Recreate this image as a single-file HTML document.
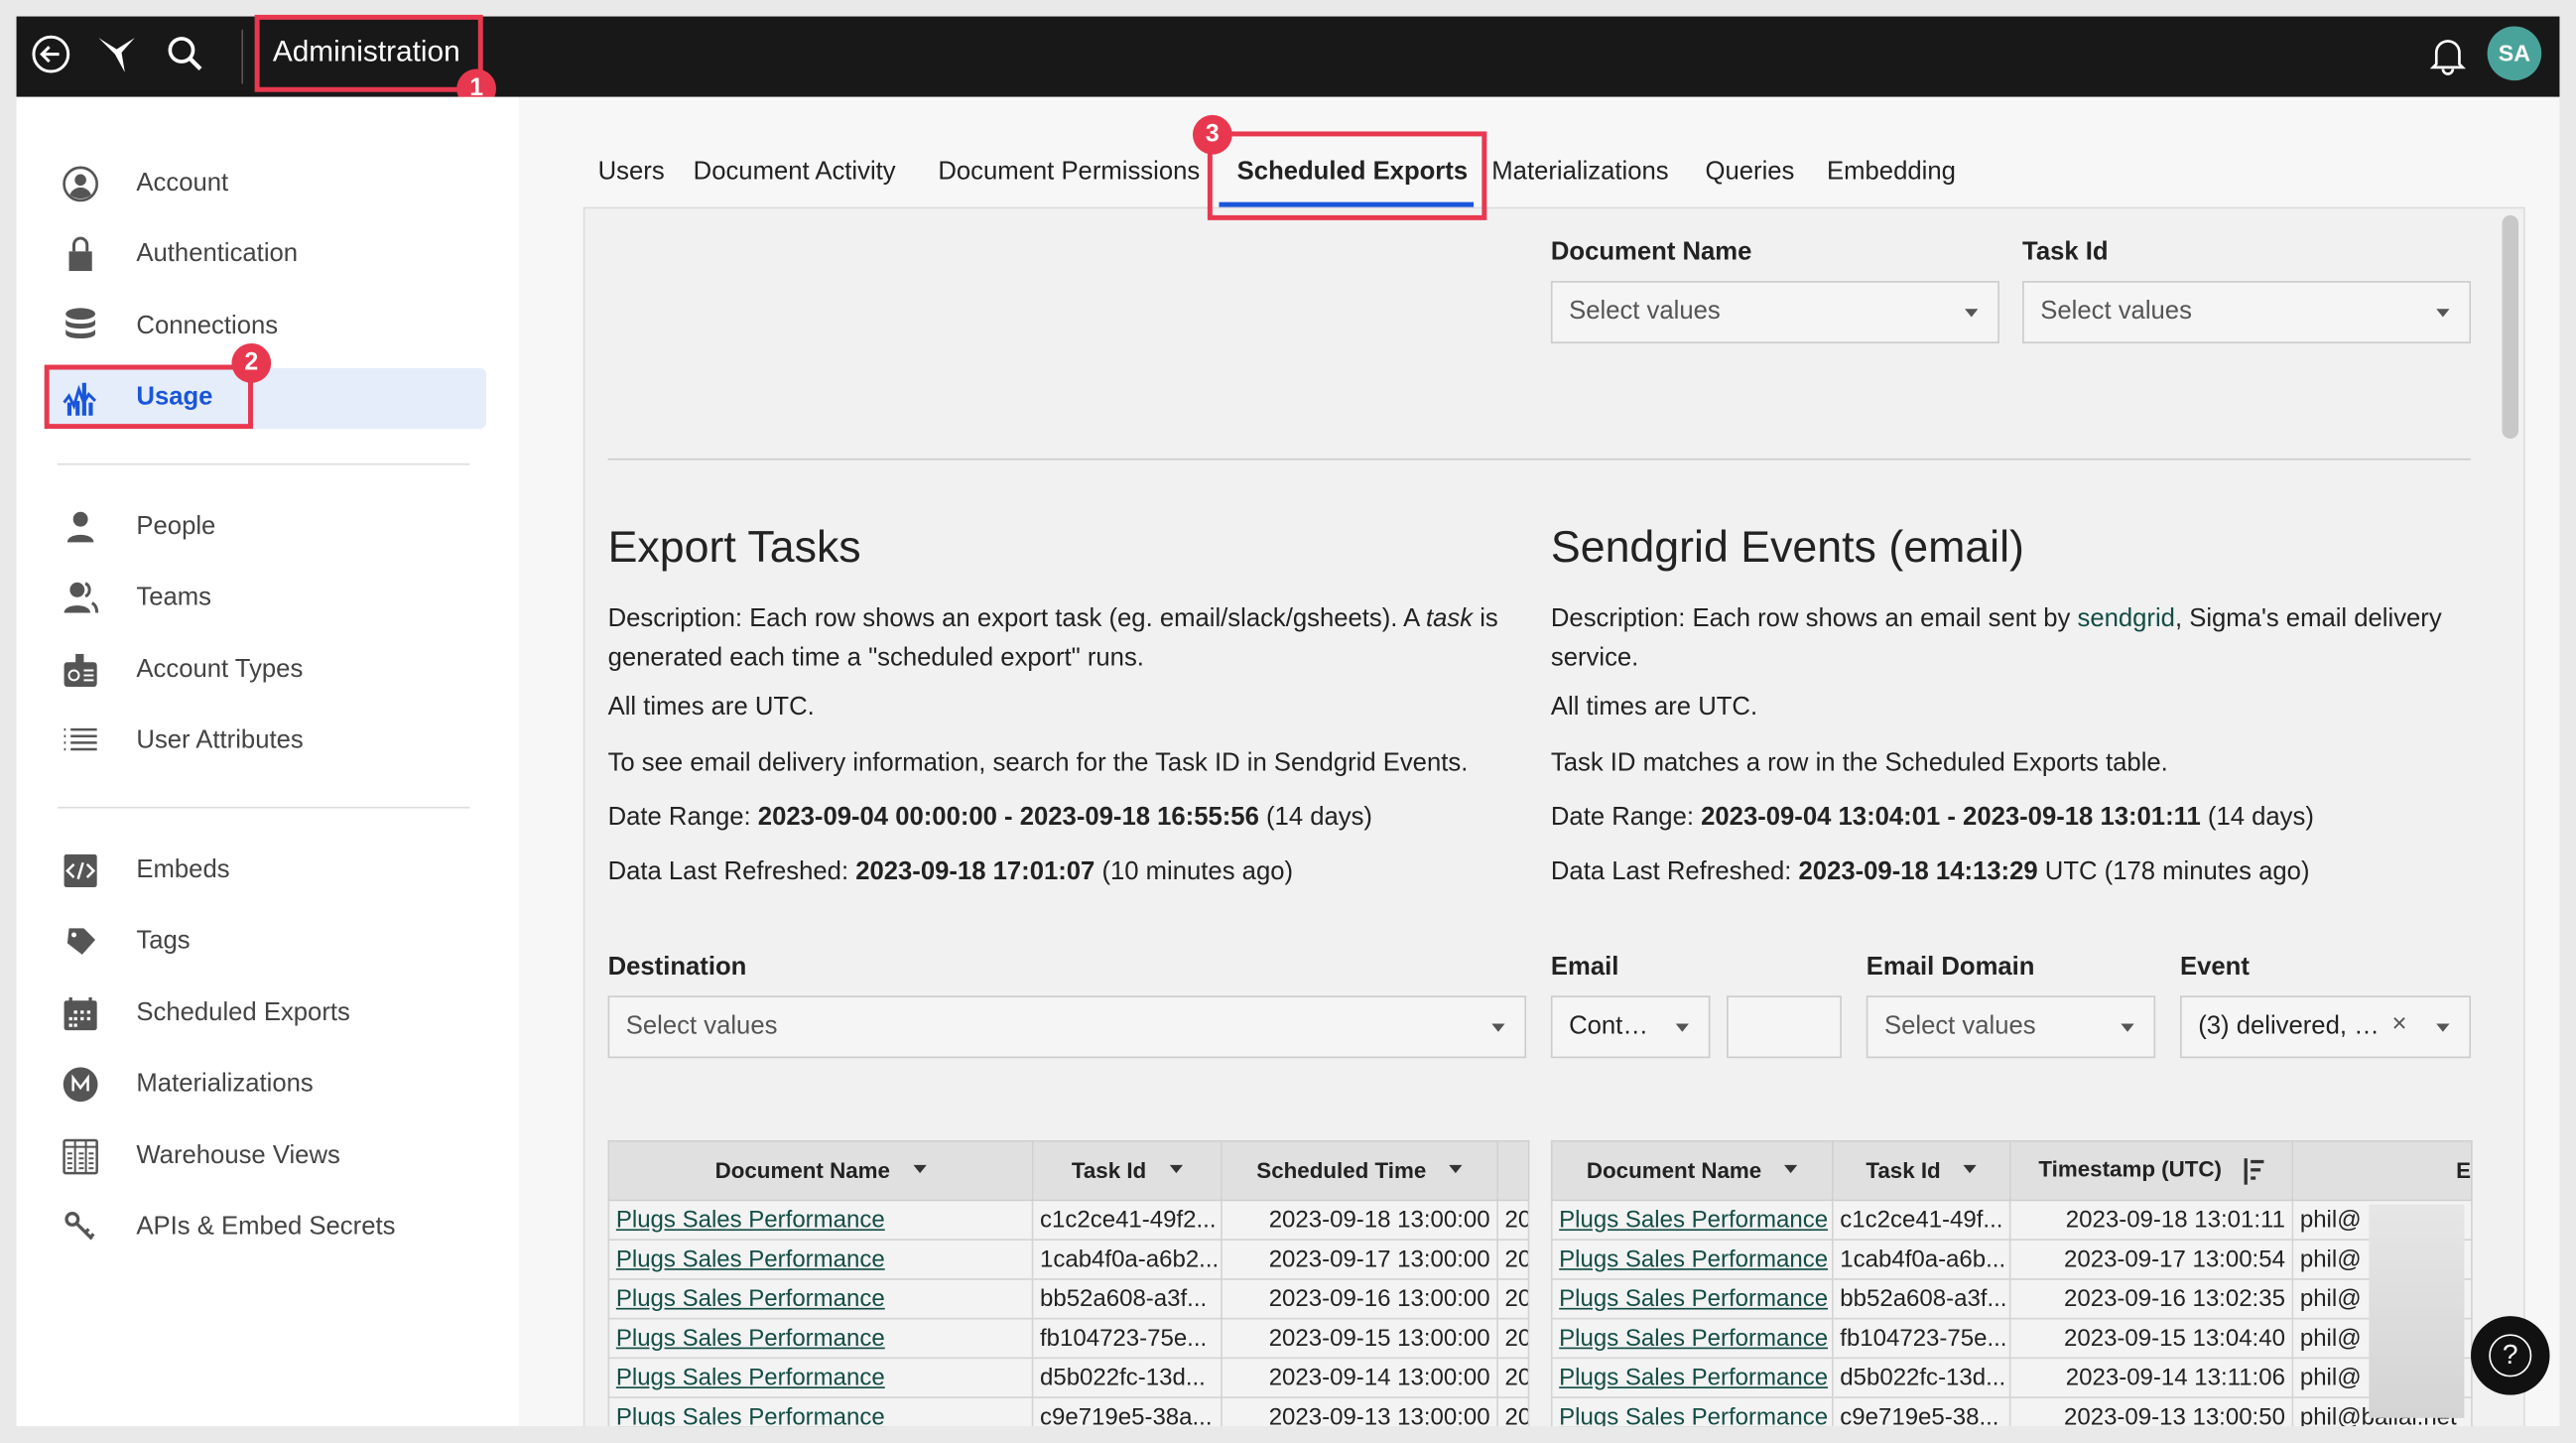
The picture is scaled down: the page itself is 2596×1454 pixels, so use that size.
<!DOCTYPE html>
<html><head><meta charset="utf-8"><style>
*{box-sizing:border-box;margin:0;padding:0}
html,body{width:2596px;height:1454px;overflow:hidden;background:#e9e9e9}
#w{position:absolute;left:0;top:0;width:1568px;height:878px;transform:scale(1.65561);transform-origin:0 0;font-family:"Liberation Sans",sans-serif;color:#222;font-size:15px}
.a{position:absolute;white-space:nowrap}
.top{position:absolute;left:10px;top:10px;width:1548px;height:49px;background:#181818}
.side{position:absolute;left:10px;top:59px;width:306px;height:809px;background:#fff}
.main{position:absolute;left:316px;top:59px;width:1242px;height:809px;background:#f7f7f7}
.panel{position:absolute;left:355px;top:126px;width:1182px;height:742px;background:#f1f1f1;border:1px solid #ddd;border-bottom:none}
.si{color:#444;font-size:15.5px}
.ic{position:absolute;left:38px;width:22px;height:22px}
.sel{position:absolute;height:38px;border:1px solid #ccc;background:#f5f5f5;color:#555;font-size:15.5px;padding:9px 10px;white-space:nowrap;overflow:hidden}
.sel:after{content:"";position:absolute;right:12px;top:16px;border:4px solid transparent;border-top:5px solid #555}
.lbl{font-size:15.5px;font-weight:bold;color:#222}
.p{font-size:15.5px;color:#222}
.red{position:absolute;border:3px solid #e8384f}
.badge{position:absolute;width:24px;height:24px;border-radius:12px;background:#e8384f;color:#fff;font-weight:bold;font-size:15px;text-align:center;line-height:24px}
table{position:absolute;border-collapse:collapse;font-size:14.5px;table-layout:fixed}
th{background:#e0e0e0;height:36px;font-weight:bold;font-size:13.5px;border:1px solid #cfcfcf;position:relative;text-align:center}
td{height:24px;border:1px solid #d4d4d4;padding:0 4px;white-space:nowrap;overflow:hidden;background:#f3f3f3}
td.l{color:#134d46;text-decoration:underline}
td.r{text-align:right}
.dd{display:inline-block;margin-left:14px;border:4px solid transparent;border-top:5px solid #333;vertical-align:middle}
</style></head><body><div id="w">
<div class="top"></div>
<svg class="a" style="left:18px;top:20px" width="26" height="26" viewBox="0 0 26 26"><circle cx="13" cy="13" r="10.5" fill="none" stroke="#fff" stroke-width="1.8"/><path d="M18 13H8M12 8.5L7.5 13 12 17.5" fill="none" stroke="#fff" stroke-width="1.8"/></svg>
<svg class="a" style="left:58px;top:20px" width="26" height="26" viewBox="0 0 26 26"><path d="M2 3L13 10 24 3 16 12 18 24 12 13Z" fill="#fff"/></svg>
<svg class="a" style="left:100px;top:20px" width="26" height="26" viewBox="0 0 26 26"><circle cx="10.5" cy="10.5" r="7" fill="none" stroke="#fff" stroke-width="2.2"/><path d="M15.5 15.5L22 22" stroke="#fff" stroke-width="2.6"/></svg>
<div class="a" style="left:147px;top:18px;width:1px;height:33px;background:#555"></div>
<div class="a" style="left:166px;top:21px;color:#fff;font-size:18px">Administration</div>
<div class="red" style="left:155px;top:9px;width:139px;height:47px"></div>
<div class="badge" style="left:278px;top:42px">1</div>
<svg class="a" style="left:1477px;top:20px" width="26" height="26" viewBox="0 0 26 26"><path d="M6 19V12a7 7 0 0 1 14 0v7l2 2H4z M10 22a3 3 0 0 0 6 0" fill="none" stroke="#fff" stroke-width="1.6"/></svg>
<div class="a" style="left:1514px;top:16px;width:33px;height:33px;border-radius:17px;background:#4aa39a;color:#fff;font-weight:bold;font-size:14px;text-align:center;line-height:33px">SA</div>

<div class="side"></div>
<div class="a" style="left:28px;top:224px;width:268px;height:37px;background:#e5edfb;border-radius:4px"></div>
<svg class="ic" style="top:101px" viewBox="0 0 22 22"><circle cx="11" cy="11" r="10" fill="none" stroke="#555" stroke-width="1.6"/><circle cx="11" cy="8.5" r="3.5" fill="#555"/><path d="M4.5 17.5a7 7 0 0 1 13 0A10 10 0 0 1 4.5 17.5z" fill="#555"/></svg>
<svg class="ic" style="top:143px" viewBox="0 0 22 22"><path d="M7 10V6a4 4 0 0 1 8 0v4" fill="none" stroke="#555" stroke-width="1.8"/><rect x="4" y="10" width="14" height="12" fill="#555"/></svg>
<svg class="ic" style="top:187px" viewBox="0 0 22 22"><ellipse cx="11" cy="4" rx="9" ry="3.5" fill="#555"/><path d="M2 7c0 4 18 4 18 0v3c0 4-18 4-18 0zM2 13c0 4 18 4 18 0v3c0 4-18 4-18 0z" fill="#555"/></svg>
<svg class="ic" style="top:231px" viewBox="0 0 22 22"><path d="M1 14l3-4 3 6 3-10 3 8 3-5 4 4" fill="none" stroke="#1a56db" stroke-width="1.8"/><rect x="3" y="14" width="2.5" height="8" fill="#1a56db"/><rect x="8" y="13" width="2.5" height="9" fill="#1a56db"/><rect x="12" y="2" width="2.5" height="20" fill="#1a56db"/><rect x="16" y="14" width="2.5" height="8" fill="#1a56db"/></svg>
<div class="a si" style="left:83px;top:103px">Account</div>
<div class="a si" style="left:83px;top:146px">Authentication</div>
<div class="a si" style="left:83px;top:190px">Connections</div>
<div class="a" style="left:83px;top:233px;color:#1a56db;font-size:15.5px;font-weight:bold">Usage</div>
<div class="red" style="left:27px;top:222px;width:127px;height:39px"></div>
<div class="badge" style="left:141px;top:209px">2</div>
<div class="a" style="left:35px;top:282px;width:251px;height:1px;background:#ddd"></div>
<svg class="ic" style="top:310px" viewBox="0 0 22 22"><circle cx="11" cy="6" r="4.5" fill="#555"/><path d="M3 20c0-6 16-6 16 0z" fill="#555"/></svg>
<svg class="ic" style="top:353px" viewBox="0 0 22 22"><circle cx="9" cy="6" r="4.5" fill="#555"/><path d="M1 20c0-6 16-6 16 0z" fill="#555"/><path d="M14 2a4.5 4.5 0 0 1 0 8M18 14c2 1 3 3 3 6" fill="none" stroke="#555" stroke-width="1.8"/></svg>
<svg class="ic" style="top:397px" viewBox="0 0 22 22"><rect x="1" y="6" width="20" height="15" rx="2" fill="#555"/><rect x="8" y="1" width="5" height="7" fill="#555"/><circle cx="7" cy="14" r="3" fill="none" stroke="#fff" stroke-width="1.2"/><path d="M13 11h6M13 14h6M13 17h6" stroke="#fff" stroke-width="1.2"/></svg>
<svg class="ic" style="top:440px" viewBox="0 0 22 22"><path d="M1 4h1M5 4h16M1 8h1M5 8h16M1 12h1M5 12h16M1 16h1M5 16h16" stroke="#555" stroke-width="1.5"/></svg>
<div class="a si" style="left:83px;top:312px">People</div>
<div class="a si" style="left:83px;top:355px">Teams</div>
<div class="a si" style="left:83px;top:399px">Account Types</div>
<div class="a si" style="left:83px;top:442px">User Attributes</div>
<div class="a" style="left:35px;top:491px;width:251px;height:1px;background:#ddd"></div>
<svg class="ic" style="top:519px" viewBox="0 0 22 22"><rect x="1" y="1" width="20" height="20" rx="1.5" fill="#555"/><path d="M7 7l-4 4 4 4M15 7l4 4-4 4M12.5 6l-3 10" fill="none" stroke="#fff" stroke-width="1.5"/></svg>
<svg class="ic" style="top:562px" viewBox="0 0 22 22"><path d="M4 3h9l7 7-8 9-9-7z" fill="#555"/><circle cx="7" cy="7" r="1.5" fill="#fff"/></svg>
<svg class="ic" style="top:606px" viewBox="0 0 22 22"><rect x="1" y="3" width="20" height="18" rx="1.5" fill="#555"/><path d="M5 1v3M17 1v3" stroke="#555" stroke-width="2"/><path d="M7 10h2M11 10h2M15 10h2M4 14h2M7 14h2M11 14h2M15 14h2M4 18h2M7 18h2" stroke="#fff" stroke-width="2"/></svg>
<svg class="ic" style="top:649px" viewBox="0 0 22 22"><circle cx="11" cy="11" r="10.5" fill="#555"/><path d="M6.5 15V7l4.5 6 4.5-6v8" fill="none" stroke="#fff" stroke-width="1.5"/></svg>
<svg class="ic" style="top:693px" viewBox="0 0 22 22"><rect x="1" y="1" width="20" height="20" rx="1" fill="none" stroke="#555" stroke-width="1.5"/><path d="M1 5h20M7.7 1v20M14.3 1v20M3 9h3M3 12h3M3 15h3M3 18h3M10 9h3M10 12h3M10 15h3M10 18h3M16 9h3M16 12h3M16 15h3M16 18h3" stroke="#555" stroke-width="1.2"/></svg>
<svg class="ic" style="top:736px" viewBox="0 0 22 22"><circle cx="6" cy="6" r="3.5" fill="none" stroke="#555" stroke-width="2"/><path d="M8.5 8.5L18 18M14 14l2-2M17 17l2-2" stroke="#555" stroke-width="2"/></svg>
<div class="a si" style="left:83px;top:521px">Embeds</div>
<div class="a si" style="left:83px;top:564px">Tags</div>
<div class="a si" style="left:83px;top:608px">Scheduled Exports</div>
<div class="a si" style="left:83px;top:651px">Materializations</div>
<div class="a si" style="left:83px;top:695px">Warehouse Views</div>
<div class="a si" style="left:83px;top:738px">APIs &amp; Embed Secrets</div>

<div class="main"></div>
<div class="a" style="left:364px;top:96px;font-size:15.5px">Users</div>
<div class="a" style="left:422px;top:96px;font-size:15.5px">Document Activity</div>
<div class="a" style="left:571px;top:96px;font-size:15.5px">Document Permissions</div>
<div class="a" style="left:753px;top:96px;font-size:15.5px;font-weight:bold">Scheduled Exports</div>
<div class="a" style="left:908px;top:96px;font-size:15.5px">Materializations</div>
<div class="a" style="left:1038px;top:96px;font-size:15.5px">Queries</div>
<div class="a" style="left:1112px;top:96px;font-size:15.5px">Embedding</div>
<div class="panel"></div>
<div class="a" style="left:742px;top:123px;width:155px;height:3px;background:#1a56db"></div>
<div class="red" style="left:735px;top:80px;width:170px;height:54px"></div>
<div class="badge" style="left:726px;top:70px">3</div>
<div class="a" style="left:1523px;top:131px;width:10px;height:136px;background:#c8c8c8;border-radius:5px"></div>

<div class="a lbl" style="left:944px;top:145px">Document Name</div>
<div class="a lbl" style="left:1231px;top:145px">Task Id</div>
<div class="sel" style="left:944px;top:171px;width:273px">Select values</div>
<div class="sel" style="left:1231px;top:171px;width:273px">Select values</div>
<div class="a" style="left:370px;top:279px;width:1134px;height:1px;background:#ccc"></div>

<div class="a" style="left:370px;top:318px;font-size:27px">Export Tasks</div>
<div class="a" style="left:944px;top:318px;font-size:27px">Sendgrid Events (email)</div>
<div class="a p" style="left:370px;top:365px;white-space:normal;width:555px;line-height:23.5px">Description: Each row shows an export task (eg. email/slack/gsheets). A <i>task</i> is generated each time a "scheduled export" runs.</div>
<div class="a p" style="left:370px;top:422px">All times are UTC.</div>
<div class="a p" style="left:370px;top:456px">To see email delivery information, search for the Task ID in Sendgrid Events.</div>
<div class="a p" style="left:370px;top:489px">Date Range: <b>2023-09-04 00:00:00 - 2023-09-18 16:55:56</b> (14 days)</div>
<div class="a p" style="left:370px;top:522px">Data Last Refreshed: <b>2023-09-18 17:01:07</b> (10 minutes ago)</div>
<div class="a p" style="left:944px;top:365px;white-space:normal;width:560px;line-height:23.5px">Description: Each row shows an email sent by <span style="color:#134d46">sendgrid</span>, Sigma's email delivery service.</div>
<div class="a p" style="left:944px;top:422px">All times are UTC.</div>
<div class="a p" style="left:944px;top:456px">Task ID matches a row in the Scheduled Exports table.</div>
<div class="a p" style="left:944px;top:489px">Date Range: <b>2023-09-04 13:04:01 - 2023-09-18 13:01:11</b> (14 days)</div>
<div class="a p" style="left:944px;top:522px">Data Last Refreshed: <b>2023-09-18 14:13:29</b> UTC (178 minutes ago)</div>

<div class="a lbl" style="left:370px;top:580px">Destination</div>
<div class="a lbl" style="left:944px;top:580px">Email</div>
<div class="a lbl" style="left:1136px;top:580px">Email Domain</div>
<div class="a lbl" style="left:1327px;top:580px">Event</div>
<div class="sel" style="left:370px;top:606px;width:559px">Select values</div>
<div class="sel" style="left:944px;top:606px;width:97px;color:#222">Cont…</div>
<div class="a" style="left:1051px;top:606px;width:70px;height:38px;border:1px solid #ccc;background:#f5f5f5"></div>
<div class="sel" style="left:1136px;top:606px;width:176px">Select values</div>
<div class="sel" style="left:1327px;top:606px;width:177px;color:#222">(3) delivered, …<span style="position:absolute;right:38px;top:8px;color:#555">×</span></div>

<table style="left:370px;top:694px;width:560px"><colgroup><col style="width:258px"><col style="width:115px"><col style="width:168px"><col style="width:19px"></colgroup>
<tr><th>Document Name<span class="dd"></span></th><th>Task Id<span class="dd"></span></th><th>Scheduled Time<span class="dd"></span></th><th></th></tr>
<tr><td class="l">Plugs Sales Performance</td><td>c1c2ce41-49f2...</td><td class="r">2023-09-18 13:00:00</td><td>20</td></tr>
<tr><td class="l">Plugs Sales Performance</td><td>1cab4f0a-a6b2...</td><td class="r">2023-09-17 13:00:00</td><td>20</td></tr>
<tr><td class="l">Plugs Sales Performance</td><td>bb52a608-a3f...</td><td class="r">2023-09-16 13:00:00</td><td>20</td></tr>
<tr><td class="l">Plugs Sales Performance</td><td>fb104723-75e...</td><td class="r">2023-09-15 13:00:00</td><td>20</td></tr>
<tr><td class="l">Plugs Sales Performance</td><td>d5b022fc-13d...</td><td class="r">2023-09-14 13:00:00</td><td>20</td></tr>
<tr><td class="l">Plugs Sales Performance</td><td>c9e719e5-38a...</td><td class="r">2023-09-13 13:00:00</td><td>20</td></tr>
</table>
<table style="left:944px;top:694px;width:560px"><colgroup><col style="width:171px"><col style="width:108px"><col style="width:172px"><col style="width:109px"></colgroup>
<tr><th>Document Name<span class="dd"></span></th><th>Task Id<span class="dd"></span></th><th>Timestamp (UTC) <span style="display:inline-block;width:12px;height:16px;border-left:2px solid #333;vertical-align:middle;margin-left:10px;background:linear-gradient(#333,#333) 2px 1px/9px 2px no-repeat,linear-gradient(#333,#333) 2px 6px/6px 2px no-repeat,linear-gradient(#333,#333) 2px 11px/3px 2px no-repeat"></span></th><th style="text-align:right">E</th></tr>
<tr><td class="l">Plugs Sales Performance</td><td>c1c2ce41-49f...</td><td class="r">2023-09-18 13:01:11</td><td>phil@</td></tr>
<tr><td class="l">Plugs Sales Performance</td><td>1cab4f0a-a6b...</td><td class="r">2023-09-17 13:00:54</td><td>phil@</td></tr>
<tr><td class="l">Plugs Sales Performance</td><td>bb52a608-a3f...</td><td class="r">2023-09-16 13:02:35</td><td>phil@</td></tr>
<tr><td class="l">Plugs Sales Performance</td><td>fb104723-75e...</td><td class="r">2023-09-15 13:04:40</td><td>phil@</td></tr>
<tr><td class="l">Plugs Sales Performance</td><td>d5b022fc-13d...</td><td class="r">2023-09-14 13:11:06</td><td>phil@</td></tr>
<tr><td class="l">Plugs Sales Performance</td><td>c9e719e5-38...</td><td class="r">2023-09-13 13:00:50</td><td>phil@ballai.net</td></tr>
</table>
<div class="a" style="left:1442px;top:733px;width:58px;height:130px;background:linear-gradient(#e6e6e6,#d4d4d4)"></div>
<div class="a" style="left:1504px;top:801px;width:48px;height:48px;border-radius:24px;background:#111"></div>
<div class="a" style="left:1515px;top:812px;width:26px;height:26px;border-radius:13px;border:1.5px solid #fff;color:#fff;text-align:center;line-height:24px;font-size:17px">?</div>
<div class="a" style="left:0;top:868px;width:1568px;height:10px;background:#e9e9e9"></div>
</div></body></html>
